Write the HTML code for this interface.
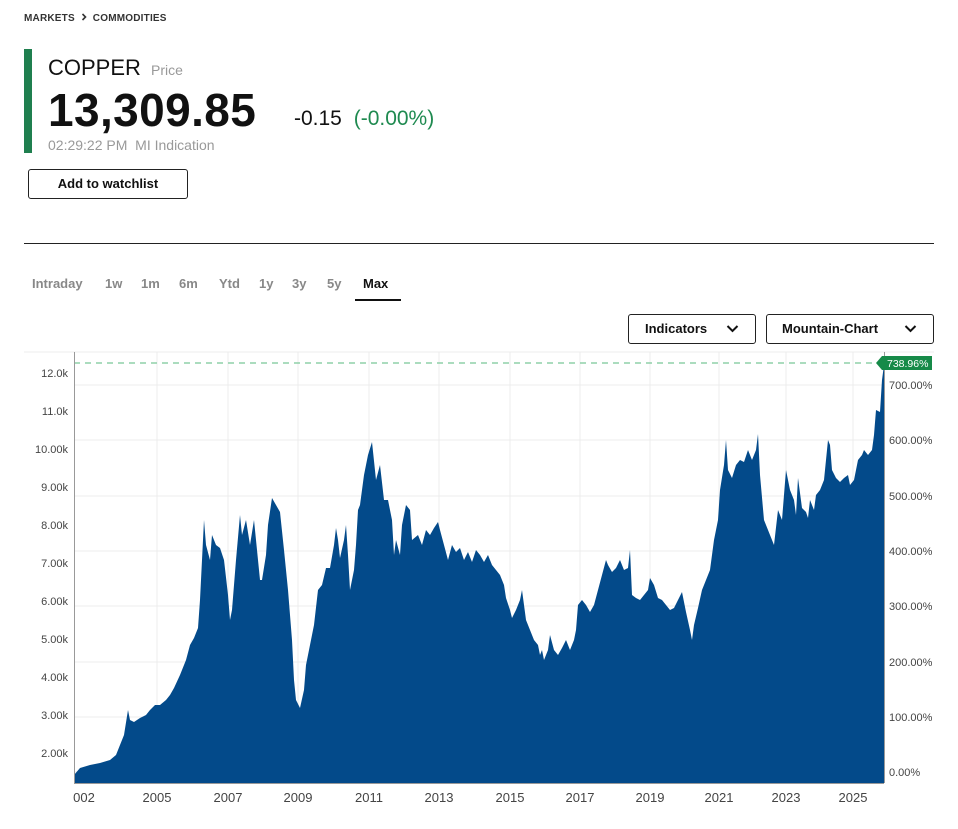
<!DOCTYPE html>
<html><head><style>
*{margin:0;padding:0;box-sizing:border-box}
body{width:958px;height:829px;background:#fff;font-family:"Liberation Sans",sans-serif;color:#111;position:relative;overflow:hidden}
.a{position:absolute;white-space:nowrap}
.t{position:absolute;top:276px;font-size:13px;color:#888;font-weight:bold}
</style></head><body>
<div class="a" style="left:24px;top:13px;font-size:10px;font-weight:bold;color:#333;letter-spacing:.2px">MARKETS <svg width="8" height="8" viewBox="0 0 8 8" style="margin:0 2px"><path d="M2.5,1 L5.5,4 L2.5,7" stroke="#333" stroke-width="1.6" fill="none"/></svg> COMMODITIES</div>
<div class="a" style="left:24px;top:49px;width:8px;height:104px;background:#1f7f4f"></div>
<div class="a" style="left:48px;top:55px;font-size:22px;color:#111">COPPER <span style="font-size:14px;color:#999;margin-left:4px">Price</span></div>
<div class="a" style="left:48px;top:83px;font-size:46px;font-weight:bold;letter-spacing:0.4px;color:#111">13,309.85</div>
<div class="a" style="left:294px;top:107px;font-size:21px;color:#111">-0.15 <span style="color:#1f8a50;margin-left:6px">(-0.00%)</span></div>
<div class="a" style="left:48px;top:137px;font-size:14px;color:#999">02:29:22 PM&nbsp; MI Indication</div>
<div class="a" style="left:28px;top:169px;width:160px;height:30px;border:1px solid #222;border-radius:3px;font-size:13px;font-weight:bold;text-align:center;line-height:28px">Add to watchlist</div>
<div class="a" style="left:24px;top:243px;width:910px;height:1px;background:#222"></div>
<div class="t" style="left:32px">Intraday</div>
<div class="t" style="left:105px">1w</div>
<div class="t" style="left:141px">1m</div>
<div class="t" style="left:179px">6m</div>
<div class="t" style="left:219px">Ytd</div>
<div class="t" style="left:259px">1y</div>
<div class="t" style="left:292px">3y</div>
<div class="t" style="left:327px">5y</div>
<div class="t" style="left:363px;color:#111">Max</div>
<div class="a" style="left:355px;top:299px;width:46px;height:2px;background:#111"></div>
<div class="a" style="left:628px;top:314px;width:128px;height:30px;border:1px solid #222;border-radius:3px;font-size:13px;font-weight:bold;line-height:28px;padding-left:16px">Indicators <svg style="position:absolute;right:16px;top:9px" width="13" height="9" viewBox="0 0 13 9"><path d="M1.5,2 L6.5,7 L11.5,2" stroke="#111" stroke-width="2" fill="none"/></svg></div>
<div class="a" style="left:766px;top:314px;width:168px;height:30px;border:1px solid #222;border-radius:3px;font-size:13px;font-weight:bold;line-height:28px;padding-left:15px">Mountain-Chart <svg style="position:absolute;right:16px;top:9px" width="13" height="9" viewBox="0 0 13 9"><path d="M1.5,2 L6.5,7 L11.5,2" stroke="#111" stroke-width="2" fill="none"/></svg></div>
<svg class="a" style="left:0;top:340px" width="958" height="489" viewBox="0 340 958 489">
<g stroke="#ececec" stroke-width="1">
<line x1="24" y1="352" x2="934" y2="352"/>
<line x1="74" y1="385" x2="884" y2="385"/><line x1="74" y1="440" x2="884" y2="440"/><line x1="74" y1="496" x2="884" y2="496"/><line x1="74" y1="551" x2="884" y2="551"/><line x1="74" y1="606" x2="884" y2="606"/><line x1="74" y1="662" x2="884" y2="662"/><line x1="74" y1="717" x2="884" y2="717"/><line x1="74" y1="772" x2="884" y2="772"/>
<line x1="157" y1="352" x2="157" y2="783"/><line x1="228" y1="352" x2="228" y2="783"/><line x1="298" y1="352" x2="298" y2="783"/><line x1="369" y1="352" x2="369" y2="783"/><line x1="439" y1="352" x2="439" y2="783"/><line x1="510" y1="352" x2="510" y2="783"/><line x1="580" y1="352" x2="580" y2="783"/><line x1="650" y1="352" x2="650" y2="783"/><line x1="719" y1="352" x2="719" y2="783"/><line x1="786" y1="352" x2="786" y2="783"/><line x1="853" y1="352" x2="853" y2="783"/>
</g>
<polygon fill="#034a8a" points="74,775 80,768 90,765 100,763 110,760 116,755 120,745 124,735 128,710 130,720 134,722 140,718 146,715 150,710 155,705 160,705 166,700 170,695 174,688 180,675 186,660 190,645 194,638 198,628 200,600 202,560 204,520 206,545 210,560 212,535 216,545 220,548 224,560 228,595 230,620 232,610 236,560 240,515 242,535 246,520 250,545 254,520 256,540 258,560 260,580 262,580 266,555 268,525 272,498 276,505 280,512 284,550 288,590 292,640 294,680 296,700 300,708 304,690 306,665 310,645 314,625 318,590 322,585 326,568 330,568 334,545 336,528 338,540 340,558 344,540 346,525 348,555 350,590 354,570 356,545 358,510 360,505 364,475 368,455 372,442 376,480 380,465 384,500 388,500 392,520 394,555 396,540 400,555 402,525 406,505 410,510 412,540 418,535 422,545 426,530 430,535 434,528 438,522 440,530 444,545 448,560 452,545 456,552 460,548 464,560 468,552 472,562 476,550 480,555 484,562 488,555 492,565 496,570 500,575 504,585 506,598 510,610 512,618 516,610 520,600 522,590 524,605 526,620 530,630 534,640 538,645 540,655 542,650 544,660 548,650 550,635 554,650 558,655 562,648 566,640 570,650 574,640 576,630 578,605 582,600 586,605 590,612 594,605 598,590 602,575 606,560 608,565 612,572 616,568 620,560 624,570 628,568 630,550 632,595 636,598 640,600 644,595 648,590 650,578 654,585 658,598 662,600 666,605 670,610 674,608 678,600 682,592 686,612 690,630 692,640 694,625 698,608 702,590 706,580 710,570 714,540 718,520 720,490 724,465 726,440 728,470 732,478 736,465 740,460 744,462 748,450 752,460 756,450 758,434 760,475 764,520 770,535 774,545 778,510 782,520 786,470 790,490 794,500 796,515 798,478 802,508 806,512 808,518 810,500 814,510 816,495 820,490 824,480 826,460 828,440 830,445 832,470 836,478 840,482 844,478 848,475 850,485 854,480 858,460 862,455 864,450 868,455 872,450 874,435 876,410 880,412 882,380 884,365 884,783 74,783"/>
<line x1="74" y1="363" x2="880" y2="363" stroke="#8fd0a8" stroke-width="1.5" stroke-dasharray="6,5"/>
<line x1="74.5" y1="352" x2="74.5" y2="783" stroke="#999"/>
<line x1="884.5" y1="352" x2="884.5" y2="783" stroke="#999"/>
<line x1="74" y1="783.5" x2="884" y2="783.5" stroke="#999"/>
<path d="M876,363 L882,356 H932 V370 H882 Z" fill="#168a48"/>
<text x="887" y="367" font-size="10.5" fill="#fff" font-family="Liberation Sans">738.96%</text>
<g font-size="11" fill="#444" font-family="Liberation Sans" text-anchor="end">
<text x="68" y="377">12.0k</text><text x="68" y="415">11.0k</text><text x="68" y="453">10.00k</text><text x="68" y="491">9.00k</text><text x="68" y="529">8.00k</text><text x="68" y="567">7.00k</text><text x="68" y="605">6.00k</text><text x="68" y="643">5.00k</text><text x="68" y="681">4.00k</text><text x="68" y="719">3.00k</text><text x="68" y="757">2.00k</text>
</g>
<g font-size="11" fill="#444" font-family="Liberation Sans">
<text x="889" y="389">700.00%</text><text x="889" y="444">600.00%</text><text x="889" y="500">500.00%</text><text x="889" y="555">400.00%</text><text x="889" y="610">300.00%</text><text x="889" y="666">200.00%</text><text x="889" y="721">100.00%</text><text x="889" y="776">0.00%</text>
</g>
<g font-size="13" fill="#444" font-family="Liberation Sans" text-anchor="middle">
<text x="84" y="802">002</text><text x="157" y="802">2005</text><text x="228" y="802">2007</text><text x="298" y="802">2009</text><text x="369" y="802">2011</text><text x="439" y="802">2013</text><text x="510" y="802">2015</text><text x="580" y="802">2017</text><text x="650" y="802">2019</text><text x="719" y="802">2021</text><text x="786" y="802">2023</text><text x="853" y="802">2025</text>
</g>
</svg>
</body></html>
